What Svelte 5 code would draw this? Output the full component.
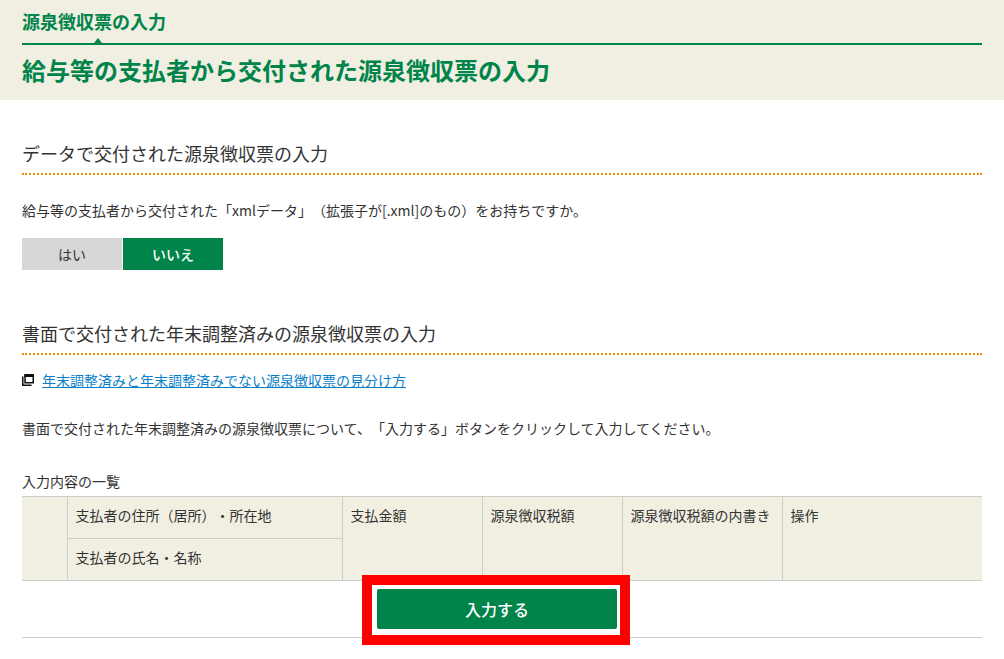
<script>
	const columns = ['支払金額', '源泉徴収税額', '源泉徴収税額の内書き', '操作'];
</script>

<div class="page">
	<header class="head">
		<p class="crumb">源泉徴収票の入力</p>
		<h1>給与等の支払者から交付された源泉徴収票の入力</h1>
	</header>

	<main class="content">
		<section class="data-section">
			<h2>データで交付された源泉徴収票の入力</h2>
			<p class="question">給与等の支払者から交付された「xmlデータ」（拡張子が[.xml]のもの）をお持ちですか。</p>
			<div class="choice">
				<button class="no-style">はい</button>
				<button class="no-style active">いいえ</button>
			</div>
		</section>

		<section class="paper-section">
			<h2>書面で交付された年末調整済みの源泉徴収票の入力</h2>
			<div class="help">
				<svg width="12" height="12" viewBox="0 0 12 12" aria-hidden="true">
					<path d="M3 2h8.25v6.75H3z" fill="#fff" stroke="#111" stroke-width="1.5" />
					<path d="M2.25 0H12v3H2.25z" fill="#111" />
					<path d="M.75 2.5v8.75H9.5" fill="none" stroke="#111" stroke-width="1.5" />
				</svg>
				<a href="#help">年末調整済みと年末調整済みでない源泉徴収票の見分け方</a>
			</div>
			<p class="lead">書面で交付された年末調整済みの源泉徴収票について、「入力する」ボタンをクリックして入力してください。</p>

			<p class="caption">入力内容の一覧</p>
			<table>
				<colgroup>
					<col class="c-blank" />
					<col class="c-name" />
					<col class="c-amount" />
					<col class="c-amount" />
					<col class="c-inner" />
					<col />
				</colgroup>
				<tbody>
					<tr>
						<th rowspan="2"></th>
						<th class="half">支払者の住所（居所）・所在地</th>
						{#each columns as col}
							<th rowspan="2">{col}</th>
						{/each}
					</tr>
					<tr>
						<th class="half">支払者の氏名・名称</th>
					</tr>
				</tbody>
			</table>

			<div class="action">
				<button class="enter">入力する</button>
			</div>
		</section>
	</main>
</div>

<style>
	:global(body) {
		margin: 0;
		background: #fff;
	}

	.page {
		font-family: "Noto Sans CJK JP", "Noto Sans", sans-serif;
		color: #333;
		font-size: 14px;
		height: 659px;
		overflow: hidden;
		text-spacing-trim: space-all;
	}

	.head {
		background: #f1efe2;
		height: 100px;
		padding: 0 22px;
		box-sizing: border-box;
	}

	.crumb {
		margin: 0;
		height: 43px;
		line-height: 42px;
		font-size: 18px;
		font-weight: 700;
		color: #00844a;
		border-bottom: 2px solid #00844a;
		box-sizing: content-box;
		position: relative;
	}

	.crumb::after {
		content: '';
		position: absolute;
		left: 72px;
		bottom: 0;
		border: 4px solid transparent;
		border-top: 0;
		border-bottom: 5px solid #00844a;
	}

	h1 {
		margin: 0;
		padding-top: 7px;
		font-size: 24px;
		line-height: 36px;
		font-weight: 700;
		color: #00844a;
	}

	.content {
		padding: 0 22px;
	}

	.data-section {
		padding-top: 40px;
	}

	h2 {
		margin: 0;
		font-size: 18px;
		font-weight: 400;
		line-height: 26px;
		height: 33px;
		border-bottom: 2px dotted #f08c00;
	}

	.question {
		margin: 0;
		padding-top: 25px;
		line-height: 20px;
	}

	.choice {
		display: flex;
		gap: 1px;
		margin-top: 18px;
	}

	.no-style {
		width: 100px;
		height: 32px;
		padding: 0;
		border: 0;
		background: #d7d7d7;
		color: #333;
		font: inherit;
	}

	.no-style.active {
		background: #00844a;
		color: #fff;
		font-weight: 500;
	}

	.paper-section {
		padding-top: 50px;
	}

	.help {
		display: flex;
		align-items: center;
		gap: 8px;
		margin-top: 15px;
		line-height: 20px;
	}

	.help a {
		color: #0a7fc9;
	}

	.lead {
		margin: 0;
		padding-top: 28px;
		line-height: 20px;
	}

	.caption {
		margin: 0;
		padding-top: 33px;
		height: 25px;
		line-height: 20px;
		font-size: 14px;
	}

	table {
		width: 960px;
		table-layout: fixed;
		border-collapse: collapse;
		background: #f1efe2;
		border-top: 1px solid #ccc;
		border-bottom: 1px solid #ccc;
	}

	.c-blank { width: 45px; }
	.c-name { width: 275px; }
	.c-amount { width: 140px; }
	.c-inner { width: 160px; }

	th {
		vertical-align: top;
		text-align: left;
		font-weight: 400;
		padding: 8px 9px 12px 8px;
		line-height: 20px;
		border-left: 1px solid #ccc;
	}

	th:first-child {
		border-left: 0;
	}

	th.half {
		height: 21px;
	}

	tr + tr th.half {
		border-top: 1px solid #ccc;
		border-left: 1px solid #ccc;
	}

	.action {
		display: flex;
		justify-content: center;
		padding: 8px 10px 8px 0;
		border-bottom: 1px solid #ccc;
	}

	.enter {
		position: relative;
		width: 240px;
		height: 40px;
		padding: 0;
		border: 0;
		border-radius: 2px;
		background: #00844a;
		color: #fff;
		font: inherit;
		font-size: 16px;
		font-weight: 500;
	}

	/* red annotation frame round the button */
	.enter::after {
		content: '';
		position: absolute;
		left: -15px;
		top: -14px;
		width: 248px;
		height: 50px;
		border: 10px solid #f00;
	}
</style>
